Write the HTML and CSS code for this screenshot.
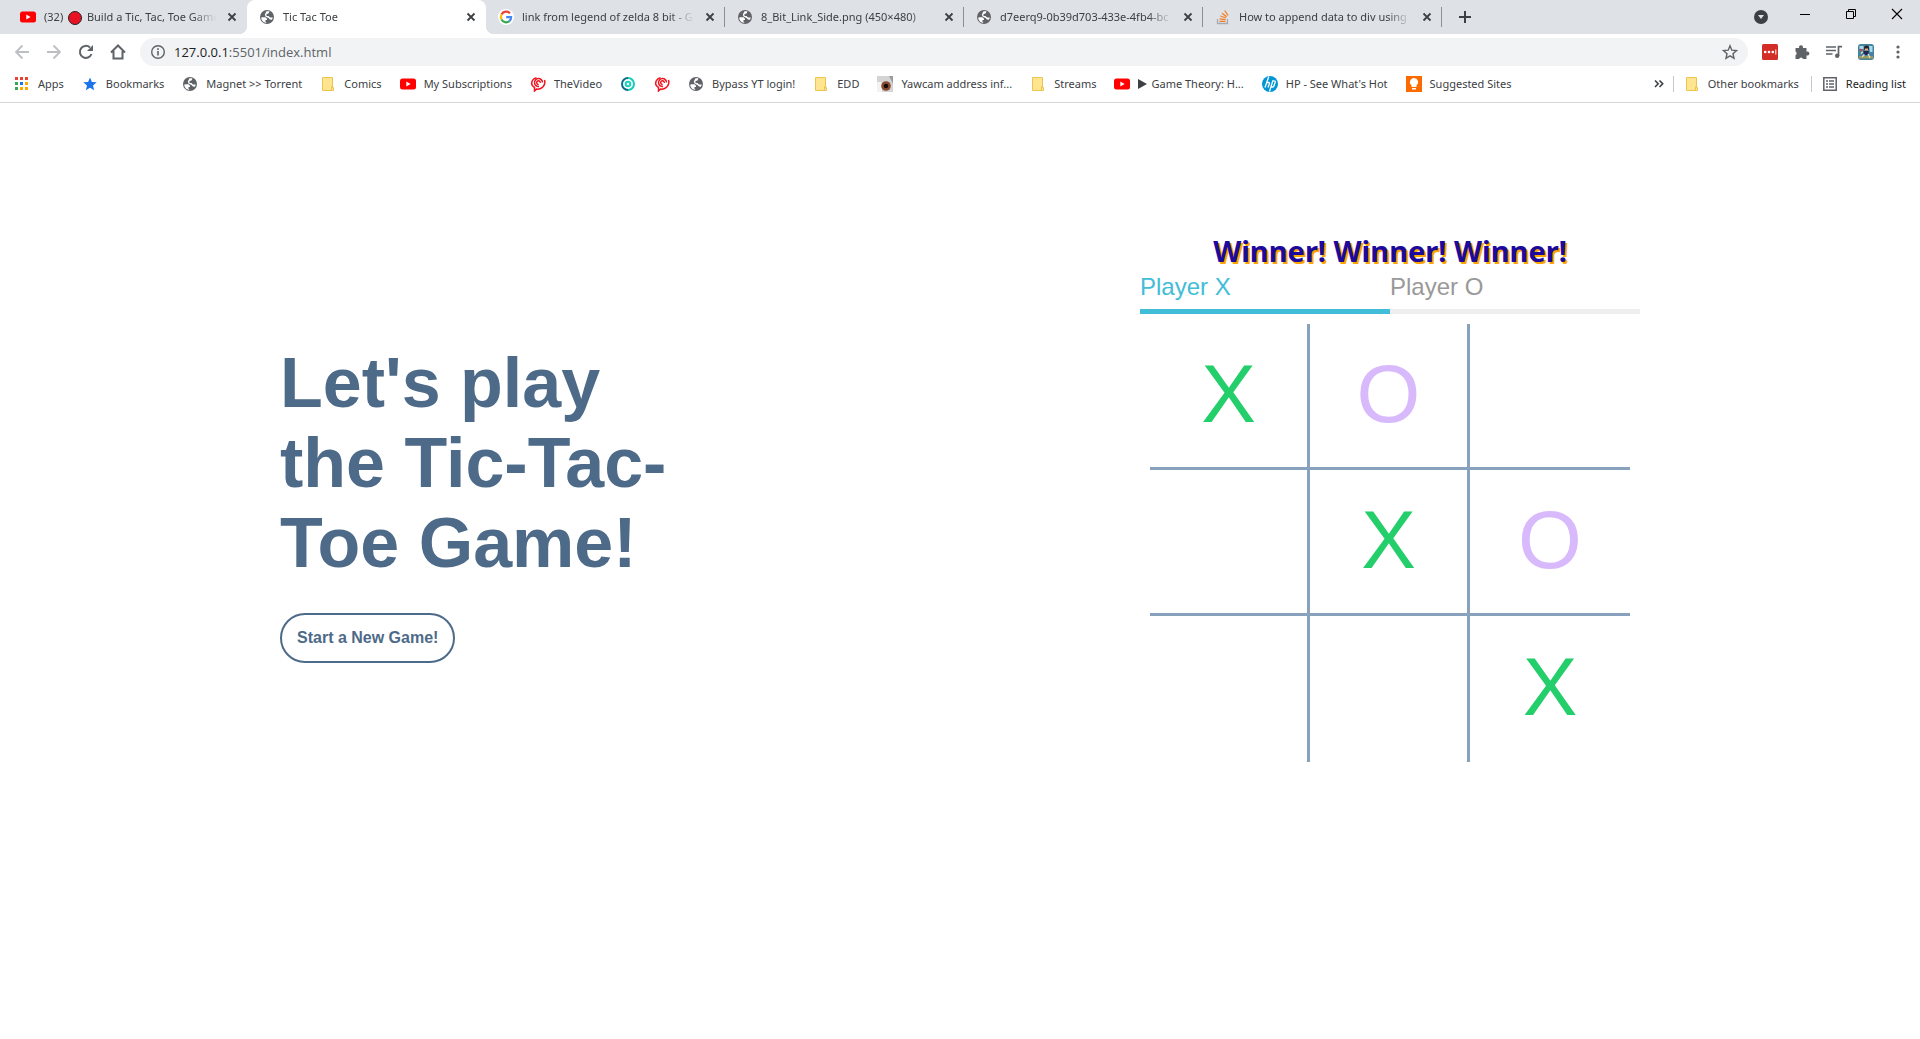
FILE: index.html
```html
<!DOCTYPE html>
<html lang="en">
<head>
<meta charset="utf-8">
<meta name="viewport" content="width=device-width, initial-scale=1">
<title>Tic Tac Toe</title>
<link rel="stylesheet" href="styles.css">
</head>
<body>
<svg class="sprite" aria-hidden="true">
  <symbol id="globe" viewBox="0 0 16 16"><circle cx="8" cy="8" r="7" fill="#5f6368"/><path d="M2.500 8.200H6.500L8 9.700V11H6.500V13.200H7.500L7 14 4 12.800 2.300 10ZM7.500 2.300H10.500L9.500 4.500 7.500 5V7H9.500L11 8.500H13.800L13 10.800 11 10.500 9.500 9 6.500 7.500 5.800 5.500Z" fill="#fff"/></symbol>
  <symbol id="youtube" viewBox="0 0 16 16"><rect y="2.500" width="16" height="11" rx="2.500" fill="#f00"/><path d="M6.300 5.500v5L10.600 8z" fill="#fff"/></symbol>
  <symbol id="folder" viewBox="0 0 16 16"><path d="M2.500 1.500h10v10h1v3h-11z" fill="#ffe58f" stroke="#eac54f"/><path d="M11.500 14v-3.500h1" fill="none" stroke="#eac54f"/></symbol>
  <symbol id="swirl" viewBox="0 0 16 16"><g fill="none" stroke="#f0141e" stroke-width="1.500"><path d="M6.500 1.800A5.500 5.500 0 0 0 2 9M1.500 7.500Q2 10 4.500 11.500V15L6.500 13A7 7 0 0 0 14.500 4"/><path d="M12.500 6.500A4 4 0 1 0 9 10.500M10.300 6.800a1.800 1.800 0 1 0-1.600 1.600"/></g></symbol>
  <symbol id="close" viewBox="0 0 16 16"><path d="m4.500 4.500 7 7m0-7-7 7" stroke="#3c4043" stroke-width="1.800"/></symbol>
</svg>

<header class="browser">
  <div class="tabstrip">
    <nav class="tabs" aria-label="Tabs">
      <div class="tab"><svg class="icon"><use href="#youtube"/></svg><span class="tab-title">(32) <i class="dot"></i> Build a Tic, Tac, Toe Game</span><button class="tab-close" aria-label="Close tab"><svg class="icon"><use href="#close"/></svg></button></div>
      <div class="tab active"><svg class="icon"><use href="#globe"/></svg><span class="tab-title">Tic Tac Toe</span><button class="tab-close" aria-label="Close tab"><svg class="icon"><use href="#close"/></svg></button></div>
      <div class="tab ruled"><svg class="icon" viewBox="0 0 16 16"><circle cx="8" cy="8" r="8" fill="#fff"/><g fill="none" stroke-width="2.200"><path d="M12 4.300A5.200 5.200 0 0 0 3.500 5.500" stroke="#ea4335"/><path d="M3.500 5.500a5.200 5.200 0 0 0 0 5" stroke="#fbbc05"/><path d="M3.500 10.500a5.200 5.200 0 0 0 7.900 1.600" stroke="#34a853"/><path d="M11.400 12.100A5.200 5.200 0 0 0 13.100 8.100H8.200" stroke="#4285f4"/></g></svg><span class="tab-title">link from legend of zelda 8 bit - G</span><button class="tab-close" aria-label="Close tab"><svg class="icon"><use href="#close"/></svg></button></div>
      <div class="tab ruled"><svg class="icon"><use href="#globe"/></svg><span class="tab-title">8_Bit_Link_Side.png (450×480)</span><button class="tab-close" aria-label="Close tab"><svg class="icon"><use href="#close"/></svg></button></div>
      <div class="tab ruled"><svg class="icon"><use href="#globe"/></svg><span class="tab-title">d7eerq9-0b39d703-433e-4fb4-bc</span><button class="tab-close" aria-label="Close tab"><svg class="icon"><use href="#close"/></svg></button></div>
      <div class="tab ruled"><svg class="icon" viewBox="0 0 16 16"><path d="M2.500 10v4.500h10V10" fill="none" stroke="#a7abb0" stroke-width="1.300"/><path d="M4.500 12.300h6M4.600 9.800l6 .8M5.300 7l5.700 2M7 4.200l4.700 3.600M9.700 1.500l3.300 5" stroke="#f48024" stroke-width="1.300"/></svg><span class="tab-title">How to append data to div using</span><button class="tab-close" aria-label="Close tab"><svg class="icon"><use href="#close"/></svg></button></div>
    </nav>
    <button class="new-tab" aria-label="New tab"><svg class="icon" viewBox="0 0 16 16"><path d="M8 2v12M2 8h12" stroke="#3c4043" stroke-width="2"/></svg></button>
    <div class="window-controls">
      <button class="tab-search" aria-label="Search tabs"><svg class="icon" viewBox="0 0 16 16"><circle cx="8" cy="8" r="7" fill="#3c4043"/><path d="M5 6h6l-3 4z" fill="#dee1e6"/></svg></button>
      <button aria-label="Minimize"><svg class="icon" viewBox="0 0 16 16"><path d="M3 8.500h10" stroke="#000"/></svg></button>
      <button aria-label="Restore"><svg class="icon" viewBox="0 0 16 16"><path d="M3.500 5.500h7v7h-7zM5.500 5.500v-2h7v7h-2" fill="none" stroke="#000"/></svg></button>
      <button aria-label="Close"><svg class="icon" viewBox="0 0 16 16"><path d="m3 3 10 10m0-10L3 13" stroke="#000" stroke-width="1.100"/></svg></button>
    </div>
  </div>

  <div class="toolbar">
    <button aria-label="Back"><svg class="icon" viewBox="0 0 16 16"><path d="M15 8H2m6.500-6.500L2 8l6.500 6.500" fill="none" stroke="#bdbfc2" stroke-width="1.800"/></svg></button>
    <button aria-label="Forward"><svg class="icon" viewBox="0 0 16 16"><path d="M1 8h13M7.500 1.500 14 8l-6.500 6.500" fill="none" stroke="#bdbfc2" stroke-width="1.800"/></svg></button>
    <button aria-label="Reload"><svg class="icon" viewBox="0 0 16 16"><path d="M13.500 10A6 6 0 1 1 12 3.500" fill="none" stroke="#5f6368" stroke-width="2"/><path d="M15 1v6H9z" fill="#5f6368"/></svg></button>
    <button aria-label="Home"><svg class="icon" viewBox="0 0 16 16"><path d="M1 8.500 8 1.500l7 7M3.500 7v7.500h9V7" fill="none" stroke="#5f6368" stroke-width="2"/></svg></button>
    <div class="omnibox">
      <svg class="icon" viewBox="0 0 16 16"><circle cx="8" cy="8" r="6.300" fill="none" stroke="#5f6368" stroke-width="1.400"/><path d="M8 7v4.500M8 4.300v1.600" stroke="#5f6368" stroke-width="1.600"/></svg>
      <span class="url"><span class="host">127.0.0.1</span>:5501/index.html</span>
      <button aria-label="Bookmark this page"><svg class="icon" viewBox="0 0 16 16"><path d="m8 1.800 1.800 4.400 4.700.4L11 9.700l1 4.600-4-2.500-4 2.500 1-4.600L1.500 6.600l4.700-.4z" fill="none" stroke="#5f6368" stroke-width="1.400"/></svg></button>
    </div>
    <div class="extensions">
      <button aria-label="Password manager"><svg class="icon" viewBox="0 0 16 16"><rect width="16" height="16" rx="1.500" fill="#d32d27"/><g fill="#fff"><circle cx="3.200" cy="8" r="1.300"/><circle cx="7" cy="8" r="1.300"/><circle cx="10.800" cy="8" r="1.300"/><path d="M13.300 5.500h1v5h-1z"/></g></svg></button>
      <button aria-label="Extensions"><svg class="icon" viewBox="0 0 16 16"><path d="M1.500 4h3.700a2 2 0 1 1 3.600 0h3.700v3.700a2 2 0 1 1 0 3.600V15H9a2 2 0 0 0-3.900 0H1.500v-3.800a2 2 0 0 0 0-3.600z" fill="#5f6368"/></svg></button>
      <button aria-label="Media controls"><svg class="icon" viewBox="0 0 16 16"><path d="M0 3h10M0 6.500h10M0 10h6.500M12.500 12V2.700H16" fill="none" stroke="#5f6368" stroke-width="1.700"/><circle cx="11.200" cy="11.800" r="2.200" fill="#5f6368"/></svg></button>
      <button aria-label="Profile"><svg class="icon" viewBox="0 0 16 16"><rect width="16" height="16" rx="3" fill="#47839c"/><path d="M1.500 2h4v3h-4zM11 2h3.500v6H12z" fill="#a5dbee"/><path d="M1 12h14v2.500H1z" fill="#9b9a57"/><circle cx="8.500" cy="4" r="2.500" fill="#252027"/><path d="M7 4.500h3v2H7z" fill="#e6a889"/><path d="M5 7h6l-1 4H6z" fill="#1d2955"/><path d="m5 7.500-2 2M10 10l2 4M6.500 10.500 4 13" stroke="#e0d9d4" stroke-width="1.400"/><path d="m2 5 2.500 2" stroke="#df3c35" stroke-width="1.500"/></svg></button>
      <button aria-label="Menu"><svg class="icon" viewBox="0 0 16 16"><g fill="#5f6368"><circle cx="8" cy="3" r="1.600"/><circle cx="8" cy="8" r="1.600"/><circle cx="8" cy="13" r="1.600"/></g></svg></button>
    </div>
  </div>

  <nav class="bookmarks" aria-label="Bookmarks">
    <a href="#"><svg class="icon" viewBox="0 0 16 16"><path d="M1 1h3v3H1zM6 1h3v3H6zM11 1h3v3h-3z" fill="#ea4335"/><path d="M1 6h3v3H1zM1 11h3v3H1z" fill="#34a853"/><path d="M6 6h3v3H6z" fill="#1a73e8"/><path d="M11 6h3v3h-3zM6 11h3v3H6zM11 11h3v3h-3z" fill="#f9ab00"/></svg>Apps</a>
    <a href="#"><svg class="icon" viewBox="0 0 16 16"><path d="m8 1.500 1.900 4.400 4.800.4-3.700 3.200 1.100 4.700L8 11.700l-4.100 2.500L5 9.500 1.300 6.300l4.800-.4z" fill="#1a73e8"/></svg>Bookmarks</a>
    <a href="#"><svg class="icon"><use href="#globe"/></svg>Magnet &gt;&gt; Torrent</a>
    <a href="#"><svg class="icon"><use href="#folder"/></svg>Comics</a>
    <a href="#"><svg class="icon"><use href="#youtube"/></svg>My Subscriptions</a>
    <a href="#"><svg class="icon"><use href="#swirl"/></svg>TheVideo</a>
    <a href="#" aria-label="Ring"><svg class="icon" viewBox="0 0 16 16"><g fill="none" stroke-width="2"><path d="M8 14A6 6 0 0 1 8 2" stroke="#0b6e8c"/><path d="M8 2a6 6 0 0 1 0 12" stroke="#12cdb8"/><circle cx="8" cy="8" r="2.300" stroke="#19d3bd"/></g></svg></a>
    <a href="#" aria-label="Swirl"><svg class="icon"><use href="#swirl"/></svg></a>
    <a href="#"><svg class="icon"><use href="#globe"/></svg>Bypass YT login!</a>
    <a href="#"><svg class="icon"><use href="#folder"/></svg>EDD</a>
    <a href="#"><svg class="icon" viewBox="0 0 16 16"><path d="M0 0h16v16H0z" fill="#d4d4d4"/><path d="M0 6h5v10H0z" fill="#f2f2f2"/><path d="M12 0h4v8z" fill="#9c9c9c"/><circle cx="9" cy="10" r="4.800" fill="#8a4b33"/><circle cx="9" cy="10" r="2.300" fill="#150c0a"/></svg>Yawcam address inf...</a>
    <a href="#"><svg class="icon"><use href="#folder"/></svg>Streams</a>
    <a href="#"><svg class="icon"><use href="#youtube"/></svg><span class="play"></span>Game Theory: H...</a>
    <a href="#"><svg class="icon" viewBox="0 0 16 16"><circle cx="8" cy="8" r="8" fill="#0096d6"/><path d="M6.800.5 3 11.500M4.500 6.500h2q1.300 0 .8 1.500l-1.300 3.500M12.500 4.800h-1.700L7.500 15.500M9 11h1.800q.8 0 1.100-1l1.200-3.500q.5-1.600-.9-1.600" fill="none" stroke="#fff" stroke-width="1.300"/></svg>HP - See What's Hot</a>
    <a href="#"><svg class="icon" viewBox="0 0 16 16"><path d="M0 0h16v16H0z" fill="#ff6a00"/><path d="M8 2a4 4 0 0 1 2.500 7.200V11h-5V9.200A4 4 0 0 1 8 2M6 12h4v1.500H6z" fill="#fff"/></svg>Suggested Sites</a>
    <div class="bookmarks-end">
      <button aria-label="More bookmarks"><svg class="icon" viewBox="0 0 16 16"><path d="m4 4.500 3.200 3.300L4 11M8.500 4.500l3.200 3.300L8.500 11" fill="none" stroke="#3c4043" stroke-width="1.600"/></svg></button>
      <a class="split" href="#"><svg class="icon"><use href="#folder"/></svg>Other bookmarks</a>
      <a class="split reading" href="#"><svg class="icon" viewBox="0 0 16 16"><path d="M1.800 1.800h12.400v12.400H1.800z" fill="none" stroke="#5f6368" stroke-width="1.500"/><path d="M4 5h2M4 8h2M4 11h2M7 5h5M7 8h5M7 11h5" stroke="#5f6368" stroke-width="1.400"/></svg>Reading list</a>
    </div>
  </nav>
</header>

<main class="game">
  <section class="intro">
    <h1>Let's play the Tic-Tac-Toe Game!</h1>
    <button class="new-game">Start a New Game!</button>
  </section>
  <section class="play-area">
    <h2 class="winner">Winner! Winner! Winner!</h2>
    <div class="players">
      <div class="player current">Player X</div>
      <div class="player">Player O</div>
    </div>
    <div class="board">
      <div class="cell x">X</div><div class="cell o">O</div><div class="cell"></div>
      <div class="cell"></div><div class="cell x">X</div><div class="cell o">O</div>
      <div class="cell"></div><div class="cell"></div><div class="cell x">X</div>
    </div>
  </section>
</main>
</body>
</html>
```
FILE: styles.css
```css
* { box-sizing: border-box; }

body {
  margin: 0;
  background: #fff;
  font-family: "Liberation Sans", Arial, sans-serif;
}

button {
  display: flex;
  align-items: center;
  justify-content: center;
  padding: 0;
  border: 0;
  background: none;
  font: inherit;
}

.sprite { display: none; }
.icon { width: 16px; height: 16px; flex: none; display: block; }

/* Browser frame */
.browser {
  font-family: "Noto Sans", "Open Sans", sans-serif;
  font-size: 11px;
  color: #3c4043;
  border-bottom: 1px solid #d5d7da;
}

.tabstrip {
  display: flex;
  height: 34px;
  padding-left: 8px;
  background: #dee1e6;
}

.tabs { display: flex; min-width: 0; }

.tab {
  position: relative;
  display: flex;
  align-items: center;
  gap: 8px;
  width: 239px;
  padding: 0 7px 0 12px;
}

.tab.active { background: #fff; border-radius: 8px 8px 0 0; }

.tab.active::before,
.tab.active::after {
  content: "";
  position: absolute;
  bottom: 0;
  width: 8px;
  height: 8px;
}
.tab.active::before { left: -8px; background: radial-gradient(circle at 0 0, transparent 8px, #fff 8px); }
.tab.active::after { right: -8px; background: radial-gradient(circle at 100% 0, transparent 8px, #fff 8px); }

.tab.ruled { background: linear-gradient(#8b8e92, #8b8e92) right 7px / 1px 20px no-repeat; }

.tab-title {
  flex: 1;
  overflow: hidden;
  white-space: nowrap;
  line-height: 20px;
  mask-image: linear-gradient(to left, transparent, #000 24px);
}

.dot {
  display: inline-block;
  width: 14px;
  height: 14px;
  margin: 0 2px;
  border: 1px solid #222;
  border-radius: 50%;
  background: #e81224;
  vertical-align: middle;
}

.new-tab { width: 46px; }

.window-controls { display: flex; margin-left: auto; height: 28px; }
.window-controls button { width: 46px; }
.window-controls .tab-search { width: 42px; height: 34px; }

.toolbar {
  display: flex;
  align-items: center;
  height: 35px;
  padding: 0 6px;
}
.toolbar button { width: 32px; height: 28px; }

.omnibox {
  display: flex;
  align-items: center;
  flex: 1;
  gap: 8px;
  height: 28px;
  margin-left: 6px;
  padding: 0 2px 0 10px;
  border-radius: 14px;
  background: #f1f3f4;
}
.url {
  flex: 1;
  color: #5f6368;
  font-family: "Open Sans", "Noto Sans", sans-serif;
  font-size: 13px;
}
.host { color: #202124; }

.extensions { display: flex; margin-left: 6px; }

.bookmarks {
  display: flex;
  align-items: center;
  gap: 18px;
  height: 33px;
  padding: 0 14px 4px;
  white-space: nowrap;
}
.bookmarks a {
  display: flex;
  align-items: center;
  gap: 8px;
  color: inherit;
  text-decoration: none;
}
.play {
  border-left: 9px solid #3c4043;
  border-top: 5px solid transparent;
  border-bottom: 5px solid transparent;
  margin-right: -4px;
}
.bookmarks-end { display: flex; align-items: center; gap: 6px; margin-left: auto; }
.bookmarks-end .split { padding-left: 10px; border-left: 1px solid #c6c9cd; }
.bookmarks-end .split + .split { margin-left: 6px; }
.bookmarks .reading { color: #202124; }

/* Game */
.game {
  display: grid;
  grid-template-columns: minmax(0, 1fr) 500px;
  align-items: center;
  gap: 40px;
  max-width: 1360px;
  margin: 0 auto;
  padding: 128px 0 80px;
}

.intro { max-width: 400px; padding-top: 12px; }

h1 {
  margin: 0 0 30px;
  color: #4d6a88;
  font-size: 70px;
  line-height: 80px;
}

.new-game {
  height: 50px;
  padding: 0 15px;
  border: 2px solid #4d6a88;
  border-radius: 25px;
  color: #4d6a88;
  font-size: 16px;
  font-weight: bold;
}

.winner {
  margin: 0;
  color: #1c0a9e;
  font-family: "Noto Sans", "Open Sans", sans-serif;
  font-size: 29px;
  line-height: 40px;
  text-align: center;
  text-shadow: 2px 2px #ffa500;
}

.players { display: grid; grid-template-columns: 1fr 1fr; }
.player {
  padding-bottom: 6px;
  border-bottom: 5px solid #eee;
  color: #999;
  font-size: 24px;
  line-height: 32px;
}
.player.current { color: #42bdd8; border-color: #42bdd8; }

.board {
  display: grid;
  grid-template-columns: repeat(3, 1fr);
  grid-auto-rows: 146px;
  margin: 10px 10px 0;
}
.cell {
  display: flex;
  align-items: center;
  justify-content: center;
  padding-bottom: 4px;
  border: 0 solid #88a2bd;
  border-width: 0 3px 3px 0;
  font-size: 82px;
  line-height: 80px;
}
.cell:nth-child(3n) { border-right: 0; }
.cell:nth-child(n + 7) { border-bottom: 0; }
.cell.x { color: #24cf6b; }
.cell.o { color: #d8b9fc; }
```
